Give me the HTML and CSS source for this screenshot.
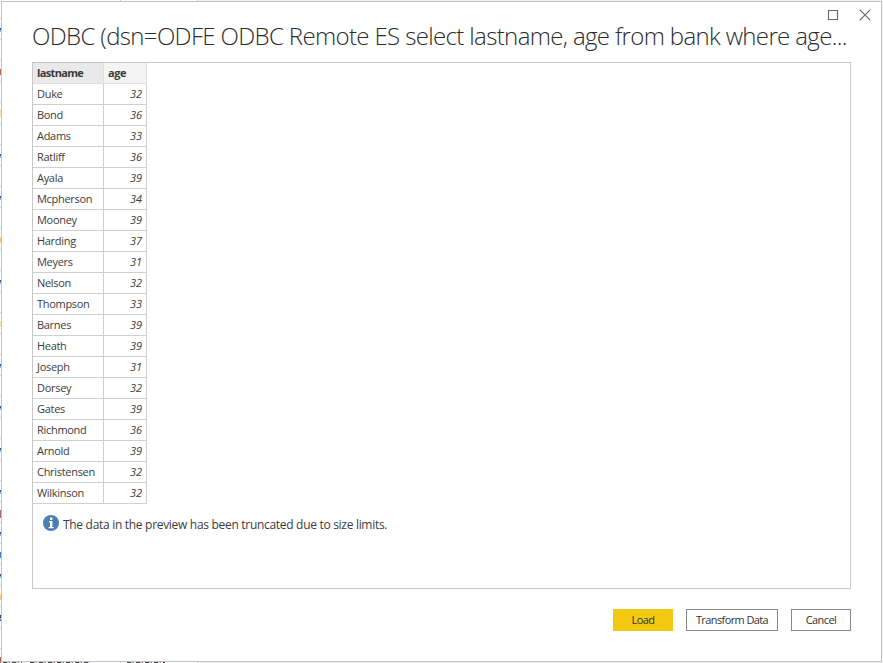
FILE: index.html
```
<!DOCTYPE html>
<html lang="en">
<head>
<meta charset="utf-8">
<title>ODBC preview</title>
<link rel="stylesheet" href="styles.css">
</head>
<body>
<main class="dialog">
  <div class="window-controls">
    <svg width="12" height="12" viewBox="0 0 12 12"><path d="M1.5 1.5h9v9h-9z"/></svg>
    <svg width="12" height="12" viewBox="0 0 12 12"><path d="M.7.7l10.6 10.6M11.3.7L.7 11.3"/></svg>
  </div>
  <h1>ODBC (dsn=ODFE ODBC Remote ES select lastname, age from bank where age...</h1>
  <section class="preview">
    <table>
      <thead><tr><th class="selected">lastname</th><th class="number">age</th></tr></thead>
      <tbody>
        <tr><td>Duke</td><td>32</td></tr>
        <tr><td>Bond</td><td>36</td></tr>
        <tr><td>Adams</td><td>33</td></tr>
        <tr><td>Ratliff</td><td>36</td></tr>
        <tr><td>Ayala</td><td>39</td></tr>
        <tr><td>Mcpherson</td><td>34</td></tr>
        <tr><td>Mooney</td><td>39</td></tr>
        <tr><td>Harding</td><td>37</td></tr>
        <tr><td>Meyers</td><td>31</td></tr>
        <tr><td>Nelson</td><td>32</td></tr>
        <tr><td>Thompson</td><td>33</td></tr>
        <tr><td>Barnes</td><td>39</td></tr>
        <tr><td>Heath</td><td>39</td></tr>
        <tr><td>Joseph</td><td>31</td></tr>
        <tr><td>Dorsey</td><td>32</td></tr>
        <tr><td>Gates</td><td>39</td></tr>
        <tr><td>Richmond</td><td>36</td></tr>
        <tr><td>Arnold</td><td>39</td></tr>
        <tr><td>Christensen</td><td>32</td></tr>
        <tr><td>Wilkinson</td><td>32</td></tr>
      </tbody>
    </table>
    <p class="notice">
      <svg width="16" height="16" viewBox="0 0 16 16"><circle cx="8" cy="8" r="8" fill="#4a7fb5"/><path d="M7 2.6h2.4V5H7zM6 6h3.4v6h1.4v1.3H5.6V12H7V7.3H6z" fill="#fff"/></svg>
      <span>The data in the preview has been truncated due to size limits.</span>
    </p>
  </section>
  <footer>
    <button class="primary">Load</button>
    <button class="wide">Transform Data</button>
    <button>Cancel</button>
  </footer>
</main>
</body>
</html>
```
FILE: styles.css
```
* { box-sizing: border-box; }
html { background: #f0f0f0; }
body {
  margin: 0;
  width: 883px;
  height: 663px;
  overflow: hidden;
  padding: 1px;
  /* slivers of the grid behind the dialog: cell content, row lines, column lines */
  background:
    linear-gradient(#b5655b, #b5655b) 0 69px / 1px 6px no-repeat,
    linear-gradient(#ffe1a0, #ffe1a0) 0 109px / 1px 8px no-repeat,
    linear-gradient(#ffc978, #ffc978) 0 237px / 1px 6px no-repeat,
    linear-gradient(#ffe1a0, #ffe1a0) 0 321px / 1px 6px no-repeat,
    linear-gradient(#b5655b, #b5655b) 0 510px / 1px 8px no-repeat,
    linear-gradient(#ffc978, #ffc978) 0 594px / 1px 6px no-repeat,
    linear-gradient(#b5655b, #b5655b) 0 657px / 1px 6px no-repeat,
    linear-gradient(#2f86cf, #2f86cf) 0 552px / 1px 6px no-repeat,
    linear-gradient(#333, #333) 0 615px / 1px 1px no-repeat,
    linear-gradient(#333, #333) 0 620px / 1px 1px no-repeat,
    repeating-linear-gradient(90deg, #444 0 4px, #bcd 4px 6px, #a76 6px 7px, #fff 7px 9px) 3px 662px / 19px 1px no-repeat,
    repeating-linear-gradient(90deg, #444 0 4px, #bcd 4px 6px, #a76 6px 7px, #fff 7px 9px) 30px 662px / 60px 1px no-repeat,
    repeating-linear-gradient(90deg, #444 0 4px, #bcd 4px 6px, #a76 6px 7px, #fff 7px 9px) 127px 662px / 38px 1px no-repeat,
    repeating-linear-gradient(#fff0 0 28px, #34508c 28px 30px, #7bc0ee 30px 32px, #fff0 32px 42px) 0 0 / 1px 663px no-repeat,
    repeating-linear-gradient(#fff0 0 18px, #d4d4d4 18px 19px, #fff0 19px 21px) 0 0 / 1px 663px no-repeat,
    linear-gradient(#d0d0d0, #d0d0d0) 120px 0 / 1px 663px no-repeat,
    linear-gradient(#d0d0d0, #d0d0d0) 197px 0 / 1px 663px no-repeat,
    linear-gradient(#fff, #fff) 0 0 / 197px 663px no-repeat,
    #f0f0f0;
  color: #3c3c3c;
  font: 11px/20px "Open Sans", "Noto Sans", sans-serif;
}
.dialog {
  width: 881px;
  height: 661px;
  border: 1px solid #c3c3c3;
  background: #fff;
  padding: 7px 30px 0;
}
.window-controls {
  display: flex;
  justify-content: flex-end;
  gap: 20px;
  height: 12px;
  margin-right: -20px;
}
.window-controls path { fill: none; stroke: #666; stroke-width: 1.1; }
h1 {
  margin: 0;
  height: 41px;
  font-size: 24px;
  line-height: 29px;
  letter-spacing: -0.64px;
  font-weight: 300;
  white-space: nowrap;
  color: #2c2c2c;
}
.preview { height: 527px; border: 1px solid #c8c8c8; }
table { border-collapse: separate; border-spacing: 0; table-layout: fixed; width: 114px; }
th, td {
  height: 21px;
  padding: 0 4px;
  line-height: 20px;
  letter-spacing: -0.3px;
  border-right: 1px solid #d0d0d0;
  border-bottom: 1px solid #d0d0d0;
  text-align: left;
}
th { background: #f4f4f4; border-color: #e0e0e0; letter-spacing: -0.65px; }
th.number { letter-spacing: -0.4px; }
th.selected { width: 71px; background: #e9e9e9; }
td:last-child { text-align: right; font-style: italic; letter-spacing: 0; }
.notice {
  display: flex;
  margin: 11px 0 0 10px;
  gap: 4px;
  font-size: 12px;
  letter-spacing: -0.3px;
}
footer { display: flex; justify-content: flex-end; gap: 13px; margin-top: 20px; }
button {
  width: 60px;
  height: 22px;
  padding: 0;
  border: 1px solid #888;
  background: #fff;
  color: #333;
  font: 11px/20px "Open Sans", "Noto Sans", sans-serif;
  letter-spacing: -0.6px;
}
button.wide { width: 92px; }
button.primary { background: #f2c811; border-color: #f2c811; }
```
